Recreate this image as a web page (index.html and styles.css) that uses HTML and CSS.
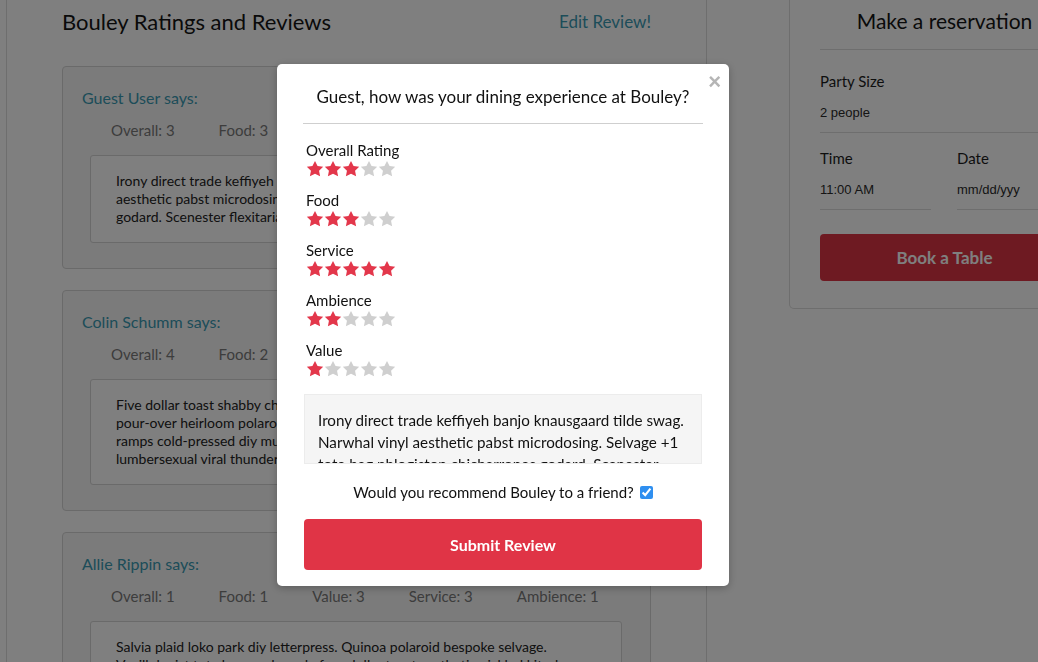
FILE: index.html
```html
<!DOCTYPE html>
<html lang="en">
<head>
<meta charset="utf-8">
<title>Bouley Ratings and Reviews</title>
<link rel="stylesheet" href="styles.css">
</head>
<body>
<svg class="defs" width="0" height="0" aria-hidden="true">
  <defs>
    <symbol id="star" viewBox="0 0 24 24">
      <polygon points="12,1.2 15.4,8 22.9,9 17.4,14.2 18.8,21.8 12,18.2 5.2,21.8 6.6,14.2 1.1,9 8.6,8"/>
    </symbol>
  </defs>
</svg>

<div class="page">
  <section class="reviews">
    <div class="reviews-head">
      <h1 class="reviews-title">Bouley Ratings and Reviews</h1>
      <a class="edit-link">Edit Review!</a>
    </div>

    <article class="review-card">
      <div class="reviewer">Guest User says:</div>
      <div class="scores">
        <span>Overall: 3</span><span>Food: 3</span><span>Value: 3</span><span>Service: 5</span><span>Ambience: 2</span>
      </div>
      <p class="review-text">Irony direct trade keffiyeh banjo knausgaard tilde swag. Narwhal vinyl<br>aesthetic pabst microdosing. Selvage +1 tote bag phlogiston chicharrones<br>godard. Scenester flexitarian street art cronut.</p>
    </article>

    <article class="review-card">
      <div class="reviewer">Colin Schumm says:</div>
      <div class="scores">
        <span>Overall: 4</span><span>Food: 2</span><span>Value: 4</span><span>Service: 3</span><span>Ambience: 5</span>
      </div>
      <p class="review-text">Five dollar toast shabby chic tumblr hashtag, church-key kale chips<br>pour-over heirloom polaroid cronut. Pitchfork single-origin coffee<br>ramps cold-pressed diy mumblecore meh, before they sold out<br>lumbersexual viral thundercats.</p>
    </article>

    <article class="review-card">
      <div class="reviewer">Allie Rippin says:</div>
      <div class="scores">
        <span>Overall: 1</span><span>Food: 1</span><span>Value: 3</span><span>Service: 3</span><span>Ambience: 1</span>
      </div>
      <p class="review-text">Salvia plaid loko park diy letterpress. Quinoa polaroid bespoke selvage.<br>Vexillologist tote bag readymade four dollar toast aesthetic pickled kitsch.</p>
    </article>
  </section>

  <aside class="reserve">
    <h2 class="reserve-title">Make a reservation</h2>
    <div class="field">
      <div class="field-label">Party Size</div>
      <div class="field-value">2 people</div>
    </div>
    <div class="field-row">
      <div class="field">
        <div class="field-label">Time</div>
        <div class="field-value">11:00 AM</div>
      </div>
      <div class="field">
        <div class="field-label">Date</div>
        <div class="field-value">mm/dd/yyy</div>
      </div>
    </div>
    <button class="book-btn">Book a Table</button>
  </aside>
</div>

<div class="overlay"></div>

<div class="modal">
  <button class="close-btn" aria-label="Close">&times;</button>
  <h3 class="modal-title">Guest, how was your dining experience at Bouley?</h3>
  <div class="rating-group">
    <div class="rating-label">Overall Rating</div>
    <div class="stars">
      <svg class="on"><use href="#star"/></svg><svg class="on"><use href="#star"/></svg><svg class="on"><use href="#star"/></svg><svg><use href="#star"/></svg><svg><use href="#star"/></svg>
    </div>
  </div>
  <div class="rating-group">
    <div class="rating-label">Food</div>
    <div class="stars">
      <svg class="on"><use href="#star"/></svg><svg class="on"><use href="#star"/></svg><svg class="on"><use href="#star"/></svg><svg><use href="#star"/></svg><svg><use href="#star"/></svg>
    </div>
  </div>
  <div class="rating-group">
    <div class="rating-label">Service</div>
    <div class="stars">
      <svg class="on"><use href="#star"/></svg><svg class="on"><use href="#star"/></svg><svg class="on"><use href="#star"/></svg><svg class="on"><use href="#star"/></svg><svg class="on"><use href="#star"/></svg>
    </div>
  </div>
  <div class="rating-group">
    <div class="rating-label">Ambience</div>
    <div class="stars">
      <svg class="on"><use href="#star"/></svg><svg class="on"><use href="#star"/></svg><svg><use href="#star"/></svg><svg><use href="#star"/></svg><svg><use href="#star"/></svg>
    </div>
  </div>
  <div class="rating-group">
    <div class="rating-label">Value</div>
    <div class="stars">
      <svg class="on"><use href="#star"/></svg><svg><use href="#star"/></svg><svg><use href="#star"/></svg><svg><use href="#star"/></svg><svg><use href="#star"/></svg>
    </div>
  </div>
  <div class="review-box">Irony direct trade keffiyeh banjo knausgaard tilde swag. Narwhal vinyl aesthetic pabst microdosing. Selvage +1 tote bag phlogiston chicharrones godard. Scenester flexitarian street art cronut.</div>
  <label class="recommend">Would you recommend Bouley to a friend? <input type="checkbox" checked></label>
  <button class="submit-btn">Submit Review</button>
</div>
</body>
</html>
```

FILE: styles.css
```css
html, body {
  margin: 0;
  padding: 0;
  overflow: hidden;
  background: #ffffff;
}

body {
  font-family: Lato, "Noto Sans", sans-serif;
  color: #222;
  width: 1038px;
  height: 662px;
}

.defs {
  position: absolute;
  width: 0;
  height: 0;
}

.page {
  display: flex;
  align-items: flex-start;
  width: 1200px;
}

/* ---------- Reviews column ---------- */
.reviews {
  margin-left: 6px;
  width: 589px;
  padding: 0 55px 40px 55px;
  border-left: 1px solid #dcdcdc;
  border-right: 1px solid #dcdcdc;
  min-height: 700px;
  flex: none;
}

.reviews-head {
  display: flex;
  justify-content: space-between;
  align-items: center;
  padding-top: 6px;
  margin-bottom: 28px;
}

.reviews-title {
  margin: 0;
  font-size: 22px;
  font-weight: 400;
  line-height: 32px;
  color: #141414;
}

.edit-link {
  font-size: 17px;
  color: #3a9ab3;
  line-height: 32px;
}

.review-card {
  background: #f6f6f6;
  border: 1px solid #d4d4d4;
  border-radius: 4px;
  padding: 20px 28px 25px 19px;
  margin-bottom: 21px;
}

.reviewer {
  font-size: 16px;
  line-height: 22px;
  color: #3a9ab3;
}

.scores {
  display: flex;
  gap: 44px;
  padding-left: 29px;
  margin-top: 10px;
  font-size: 15px;
  line-height: 22px;
  color: #7a7a7a;
  white-space: nowrap;
}

.review-text {
  margin: 14px 0 0 8px;
  background: #ffffff;
  border: 1px solid #d4d4d4;
  border-radius: 3px;
  padding: 16px 20px 16px 25px;
  font-size: 14px;
  line-height: 18px;
  color: #222;
  white-space: nowrap;
  overflow: hidden;
}

/* ---------- Reservation column ---------- */
.reserve {
  margin-left: 82px;
  width: 249px;
  flex: none;
  padding: 5px 31px 27px 30px;
  border: 1px solid #dcdcdc;
  border-top: 0;
  border-radius: 0 0 5px 5px;
}

.reserve-title {
  margin: 0;
  font-size: 21px;
  font-weight: 400;
  line-height: 32px;
  text-align: center;
  color: #141414;
  white-space: nowrap;
  padding-bottom: 12px;
  border-bottom: 1px solid #dcdcdc;
}

.field {
  padding-top: 21px;
  border-bottom: 1px solid #dcdcdc;
  padding-bottom: 9px;
}

.field-label {
  font-size: 15px;
  line-height: 20px;
  color: #1c1c1c;
}

.field-value {
  margin-top: 12px;
  font-family: "Liberation Sans", Arial, sans-serif;
  font-size: 13px;
  line-height: 20px;
  color: #2a2a2a;
}

.field-row {
  display: grid;
  grid-template-columns: 111px 111px;
  gap: 26px;
}

.field-row .field {
  padding-top: 15px;
}

.book-btn {
  display: block;
  width: 100%;
  margin-top: 24px;
  height: 47px;
  border: 0;
  border-radius: 4px;
  background: #dc3545;
  color: #ffffff;
  font-family: Lato, "Noto Sans", sans-serif;
  font-size: 17px;
  font-weight: 700;
}

/* ---------- Overlay & modal ---------- */
.overlay {
  position: fixed;
  inset: 0;
  background: rgba(0, 0, 0, 0.5);
}

.modal {
  position: fixed;
  top: 64px;
  left: 277px;
  width: 400px;
  padding: 21px 26px 16px;
  background: #ffffff;
  border-radius: 5px;
  box-shadow: 0 2px 8px rgba(0, 0, 0, 0.25);
}

.close-btn {
  position: absolute;
  top: 6px;
  right: 8px;
  border: 0;
  background: none;
  padding: 0;
  font-family: "Liberation Sans", Arial, sans-serif;
  font-size: 22px;
  font-weight: 700;
  line-height: 24px;
  color: #b5b5b5;
}

.modal-title {
  margin: 0;
  padding-bottom: 14px;
  border-bottom: 1px solid #cfcfcf;
  font-size: 17px;
  font-weight: 400;
  line-height: 24px;
  text-align: center;
  color: #111;
  white-space: nowrap;
}

.rating-group {
  padding-left: 3px;
  margin-bottom: 12px;
}

.rating-group:first-of-type {
  margin-top: 16px;
}

.rating-label {
  font-size: 15px;
  line-height: 20px;
  color: #111;
}

.stars {
  display: flex;
  height: 18px;
}

.stars svg {
  width: 18px;
  height: 18px;
  fill: #cfcfcf;
}

.stars svg.on {
  fill: #e3374b;
}

.review-box {
  margin: 16px 1px 0;
  height: 42px;
  padding: 14px 13px 12px;
  background: #f5f5f5;
  border: 1px solid #ececec;
  font-size: 15.2px;
  line-height: 22px;
  color: #111;
  overflow: hidden;
}

.recommend {
  display: flex;
  justify-content: center;
  align-items: center;
  gap: 6px;
  margin-top: 16px;
  font-size: 15px;
  line-height: 24px;
  color: #111;
}

.recommend input {
  margin: 0;
  width: 13px;
  height: 13px;
  accent-color: #2f8ff0;
}

.submit-btn {
  display: block;
  width: 398px;
  margin: 15px 1px 0;
  height: 51px;
  border: 0;
  border-radius: 4px;
  background: #e03446;
  color: #ffffff;
  font-family: Lato, "Noto Sans", sans-serif;
  font-size: 16px;
  font-weight: 700;
}
```
